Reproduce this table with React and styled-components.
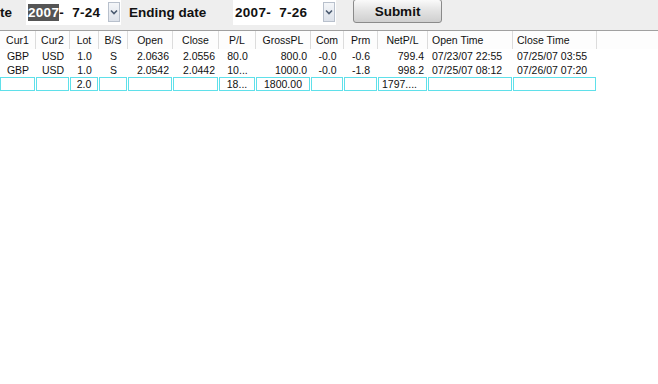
import React from 'react';
import styled, { createGlobalStyle } from 'styled-components';

const GlobalStyle = createGlobalStyle`
    html, body {
        margin: 0;
        padding: 0;
        background: #ffffff;
    }
    body {
        font-family: "Liberation Sans", Arial, sans-serif;
    }
`;

const columns = [
    { key: 'cur1', label: 'Cur1', width: 36, align: 'center' },
    { key: 'cur2', label: 'Cur2', width: 34, align: 'center' },
    { key: 'lot', label: 'Lot', width: 29, align: 'center' },
    { key: 'bs', label: 'B/S', width: 29, align: 'center' },
    { key: 'open', label: 'Open', width: 45, align: 'right' },
    { key: 'close', label: 'Close', width: 46, align: 'right' },
    { key: 'pl', label: 'P/L', width: 37, align: 'center' },
    { key: 'gross', label: 'GrossPL', width: 55, align: 'right' },
    { key: 'com', label: 'Com', width: 33, align: 'center' },
    { key: 'prm', label: 'Prm', width: 34, align: 'center' },
    { key: 'net', label: 'NetP/L', width: 50, align: 'right' },
    { key: 'openTime', label: 'Open Time', width: 85, align: 'left', headAlign: 'left' },
    { key: 'closeTime', label: 'Close Time', width: 84, align: 'left', headAlign: 'left' },
];

const trades = [
    {
        cur1: 'GBP', cur2: 'USD', lot: '1.0', bs: 'S', open: '2.0636', close: '2.0556',
        pl: '80.0', gross: '800.0', com: '-0.0', prm: '-0.6', net: '799.4',
        openTime: '07/23/07 22:55', closeTime: '07/25/07 03:55',
    },
    {
        cur1: 'GBP', cur2: 'USD', lot: '1.0', bs: 'S', open: '2.0542', close: '2.0442',
        pl: '10...', gross: '1000.0', com: '-0.0', prm: '-1.8', net: '998.2',
        openTime: '07/25/07 08:12', closeTime: '07/26/07 07:20',
    },
];

const totals = { lot: '2.0', pl: '18...', gross: '1800.00', net: '1797....' };

const gridTemplate = columns.map(c => `${c.width}px`).join(' ') + ' 1fr';

const Chevron = () => (
    <svg width="8" height="6" viewBox="0 0 8 6">
        <path d="M1 1.5 L4 4.5 L7 1.5" fill="none" stroke="#4a5a70" strokeWidth="1.6" />
    </svg>
);

const DateCombo = ({ year, rest, selected, width, offset }) => (
    <Combo width={width} offset={offset}>
        <ComboText>
            <Year selected={selected}>{year}</Year>
            {rest}
        </ComboText>
        <DropButton><Chevron /></DropButton>
    </Combo>
);

export default function App() {
    return (
        <Page>
            <GlobalStyle />
            <Toolbar>
                <Label width={15} offset={0}>te</Label>
                <DateCombo year="2007" rest="-  7-24" selected width={95} offset={11} />
                <Label width={78} offset={8}>Ending date</Label>
                <DateCombo year="2007" rest="-  7-26" width={103} offset={26} />
                <SubmitButton>Submit</SubmitButton>
            </Toolbar>
            <Table>
                <HeaderRow>
                    {columns.map(c => (
                        <HeadCell key={c.key} align={c.headAlign || 'center'}>{c.label}</HeadCell>
                    ))}
                    <HeadCell />
                </HeaderRow>
                {trades.map((t, i) => (
                    <Row key={i}>
                        {columns.map(c => (
                            <Cell key={c.key} align={c.align}>{t[c.key]}</Cell>
                        ))}
                        <Cell />
                    </Row>
                ))}
                <TotalRow>
                    {columns.map(c => (
                        <TotalCell key={c.key} align={c.key === 'net' ? 'left' : 'center'}>
                            {totals[c.key] || ''}
                        </TotalCell>
                    ))}
                </TotalRow>
            </Table>
        </Page>
    );
}

const Page = styled.div`
    width: 658px;
    height: 384px;
    background: #ffffff;
    overflow: hidden;
`;

const Toolbar = styled.div`
    display: flex;
    align-items: flex-start;
    height: 30px;
    background: #eeeeee;
`;

const Label = styled.span`
    display: block;
    width: ${props => props.width}px;
    margin-left: ${props => props.offset}px;
    margin-top: 5px;
    line-height: 16px;
    font-size: 13.5px;
    font-weight: bold;
    color: #111;
    white-space: nowrap;
`;

const Combo = styled.div`
    display: flex;
    align-items: center;
    justify-content: space-between;
    width: ${props => props.width}px;
    margin-left: ${props => props.offset}px;
    height: 25px;
    background: #ffffff;
    box-sizing: border-box;
    padding: 0 1px 0 2px;
`;

const ComboText = styled.span`
    font-size: 13.5px;
    font-weight: bold;
    letter-spacing: 0.3px;
    color: #111;
    white-space: pre;
    margin-top: -1px;
`;

const Year = styled.span`
    background: ${props => (props.selected ? '#555555' : 'transparent')};
    color: ${props => (props.selected ? '#ffffff' : '#111')};
    padding: 1px 0;
`;

const DropButton = styled.span`
    display: flex;
    align-items: center;
    justify-content: center;
    width: 12px;
    height: 20px;
    margin-top: -2px;
    box-sizing: border-box;
    border: 1px solid #b8c0cc;
    background: linear-gradient(#f4f6f9, #dde2ea);
`;

const SubmitButton = styled.button`
    margin-left: 17px;
    margin-top: -1px;
    width: 89px;
    height: 24px;
    border: 1px solid #8a8a8a;
    border-radius: 3px;
    background: linear-gradient(#fafafa 0%, #e4e4e4 45%, #cfcfcf 100%);
    font-family: "Liberation Sans", Arial, sans-serif;
    font-size: 13.5px;
    font-weight: bold;
    color: #111;
    padding: 0;
`;

const Table = styled.div`
    display: flex;
    flex-direction: column;
    font-size: 10.5px;
    color: #111;
`;

const HeaderRow = styled.div`
    display: grid;
    grid-template-columns: ${gridTemplate};
    height: 18px;
    border-top: 1px solid #a0a0a0;
    background: #fdfdfd;
`;

const HeadCell = styled.div`
    display: flex;
    align-items: center;
    justify-content: ${props => (props.align === 'left' ? 'flex-start' : 'center')};
    padding: 0 4px;
    border-right: 1px solid #dcdcdc;
    white-space: nowrap;
    overflow: hidden;
    &:last-child {
        border-right: none;
    }
`;

const Row = styled.div`
    display: grid;
    grid-template-columns: ${gridTemplate};
    height: 14px;
    &:first-of-type {
        margin-top: 1px;
    }
`;

const alignMap = { left: 'flex-start', center: 'center', right: 'flex-end' };

const Cell = styled.div`
    display: flex;
    align-items: center;
    justify-content: ${props => alignMap[props.align] || 'center'};
    padding: 0 4px;
    white-space: nowrap;
    overflow: hidden;
`;

const TotalRow = styled.div`
    display: grid;
    grid-template-columns: ${columns.map(c => `${c.width}px`).join(' ')};
    height: 14px;
`;

const TotalCell = styled.div`
    display: flex;
    align-items: center;
    justify-content: ${props => alignMap[props.align]};
    margin-right: 1px;
    padding: 0 3px;
    border: 1px solid #5fe0ea;
    white-space: nowrap;
    overflow: hidden;
`;
